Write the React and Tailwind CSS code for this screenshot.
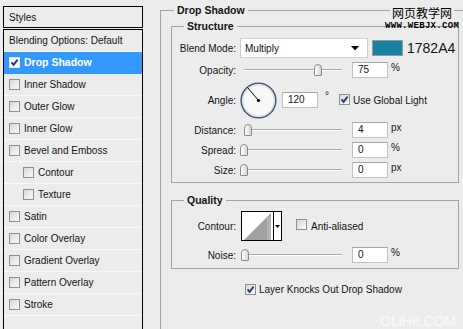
import React from "react";

function Check({ checked = false, selected = false }) {
  return (
    <span
      className={`inline-flex w-[11px] h-[11px] shrink-0 border ${
        selected
          ? "border-[#dfe9f7] bg-white"
          : "border-[#8f9090] bg-linear-to-br from-[#d9d9d6] to-[#fafaf8]"
      }`}
    >
      {checked && (
        <svg viewBox="0 0 9 9" className="w-[9px] h-[9px]">
          <path d="M1.6 4.4 L3.6 6.9 L7.6 1.6" stroke="#2a3b8c" strokeWidth="1.9" fill="none" />
        </svg>
      )}
    </span>
  );
}

function Thumb() {
  return (
    <div className="w-[8px] h-[12px] rounded-t-[4px] rounded-b-[1px] border border-[#8a8a8a] bg-linear-to-r from-white to-[#d6d6d6]" />
  );
}

function Slider({ pos }) {
  return (
    <div className="relative w-[102px] h-[16px] shrink-0">
      <div className="absolute left-[4px] right-0 top-[7px] h-[2px] border-t border-t-[#a9a9a9] border-b border-b-white" />
      <div className="absolute top-[2px]" style={{ left: pos }}>
        <Thumb />
      </div>
    </div>
  );
}

function Input({ value, className = "" }) {
  return (
    <div
      className={`w-[36px] h-[16px] shrink-0 bg-white border border-[#c2c2c2] border-t-[#a5a5a5] pl-[5px] flex items-center leading-none ${className}`}
    >
      {value}
    </div>
  );
}

function Unit({ children }) {
  return <span className="ml-[3px] self-start leading-[12px]">{children}</span>;
}

function Label({ children }) {
  return <span className="w-[64px] shrink-0 text-right mr-[4px]">{children}</span>;
}

function SliderRow({ label, pos, value, unit, className = "" }) {
  return (
    <div className={`flex items-center h-[16px] ${className}`}>
      <Label>{label}</Label>
      <Slider pos={pos} />
      <Input value={value} className="ml-[10px]" />
      <Unit>{unit}</Unit>
    </div>
  );
}

const items = [
  { t: "Blending Options: Default", noCheck: true },
  { t: "Drop Shadow", checked: true, selected: true },
  { t: "Inner Shadow" },
  { t: "Outer Glow" },
  { t: "Inner Glow" },
  { t: "Bevel and Emboss" },
  { t: "Contour", indent: true },
  { t: "Texture", indent: true },
  { t: "Satin" },
  { t: "Color Overlay" },
  { t: "Gradient Overlay" },
  { t: "Pattern Overlay" },
  { t: "Stroke" },
];

export default function App() {
  return (
    <div className="relative w-[463px] h-[329px] overflow-hidden bg-[#ececec] flex text-[10px] text-[#141414] font-['Liberation_Sans',Arial,sans-serif]">
      {/* Left styles list */}
      <div className="ml-[3px] w-[140px] shrink-0 flex flex-col pt-[6px]">
        <div className="h-[22px] border border-black flex items-center pl-[5px]">Styles</div>
        <div className="mt-[1px] flex-1 border border-black border-b-0 flex flex-col">
          {items.map((it) => (
            <div
              key={it.t}
              className={`h-[22px] shrink-0 flex items-center gap-[4px] border-b ${
                it.selected
                  ? "bg-[#3399ff] text-white font-bold text-[10.5px] border-[#3399ff]"
                  : "border-[#f8f8f8]"
              } ${it.indent ? "pl-[19px]" : "pl-[5px]"}`}
            >
              {!it.noCheck && <Check checked={it.checked} selected={it.selected} />}
              <span>{it.t}</span>
            </div>
          ))}
        </div>
      </div>

      {/* Right settings */}
      <div className="flex-1 min-w-0 pl-[17px]">
        <fieldset className="mt-[4px] w-[330px] border border-[#a3a3a3]">
          <legend className="ml-[13px] px-[3px] text-[10.5px] leading-[13px] font-bold">Drop Shadow</legend>
          <div className="pl-[10px] pt-[3px] pb-[60px] flex flex-col">
            {/* Structure */}
            <fieldset className="w-[288px] border border-[#a3a3a3]">
              <legend className="ml-[12px] px-[3px] text-[10.5px] leading-[13px] font-bold">Structure</legend>
              <div className="flex flex-col pt-[5px] pb-[4px]">
                <div className="flex items-center h-[20px]">
                  <Label>Blend Mode:</Label>
                  <div className="w-[128px] h-[20px] shrink-0 bg-white border border-[#cfcfcf] flex items-center justify-between pl-[4px] pr-[8px]">
                    <span>Multiply</span>
                    <svg width="8" height="5" viewBox="0 0 8 5">
                      <path d="M0 0 H8 L4 4.5 Z" fill="#000" />
                    </svg>
                  </div>
                  <div className="ml-[4px] w-[31px] h-[16px] shrink-0 bg-[#1782A4] border border-[#9a9a9a]" />
                  <span className="ml-[4px] text-[14px] leading-none">1782A4</span>
                </div>

                <SliderRow label="Opacity:" pos={74} value="75" unit="%" className="mt-[4px]" />

                <div className="flex items-center h-[36px] mt-[4px]">
                  <Label>Angle:</Label>
                  <svg width="37" height="37" viewBox="0 0 37 37" className="shrink-0">
                    <circle cx="18.5" cy="18.5" r="17.3" fill="#f7f7f8" stroke="#4b5a7c" strokeWidth="1.6" />
                    <circle cx="18.5" cy="18.5" r="15.8" fill="none" stroke="#d5d9e2" strokeWidth="1" />
                    <line x1="18.5" y1="18.5" x2="7.5" y2="5.5" stroke="#000" strokeWidth="1" />
                    <circle cx="18.5" cy="18.5" r="1.6" fill="#000" />
                  </svg>
                  <Input value="120" className="ml-[5px]" />
                  <span className="ml-[7px] self-start mt-[9px] leading-[10px]">°</span>
                  <span className="ml-[10px]">
                    <Check checked />
                  </span>
                  <span className="ml-[3px]">Use Global Light</span>
                </div>

                <SliderRow label="Distance:" pos={4} value="4" unit="px" className="mt-[4px]" />
                <SliderRow label="Spread:" pos={0} value="0" unit="%" className="mt-[4px]" />
                <SliderRow label="Size:" pos={0} value="0" unit="px" className="mt-[4px]" />
              </div>
            </fieldset>

            {/* Quality */}
            <fieldset className="mt-[11px] w-[288px] border border-[#a3a3a3]">
              <legend className="ml-[12px] px-[3px] text-[10.5px] leading-[13px] font-bold">Quality</legend>
              <div className="flex flex-col pt-[4px] pb-[5px]">
                <div className="flex items-center h-[30px]">
                  <Label>Contour:</Label>
                  <div className="ml-[1px] w-[41px] h-[30px] shrink-0 border border-black bg-white flex">
                    <svg width="31" height="28" viewBox="0 0 31 28" className="shrink-0">
                      <polygon points="2,28 29,1 29,28" fill="#a2a2a2" />
                      <rect x="25" y="5" width="4" height="23" fill="#b3b3b3" />
                    </svg>
                    <div className="flex-1 border-l border-black flex items-center justify-center">
                      <svg width="5" height="3" viewBox="0 0 5 3">
                        <path d="M0 0 H5 L2.5 3 Z" fill="#000" />
                      </svg>
                    </div>
                  </div>
                  <span className="ml-[14px]">
                    <Check />
                  </span>
                  <span className="ml-[4px]">Anti-aliased</span>
                </div>
                <SliderRow label="Noise:" pos={1} value="0" unit="%" className="mt-[6px]" />
              </div>
            </fieldset>

            <div className="mt-[13px] h-[14px] flex items-center ml-[74px]">
              <Check checked />
              <span className="ml-[3px]">Layer Knocks Out Drop Shadow</span>
            </div>
          </div>
        </fieldset>
      </div>

      {/* Watermarks */}
      <div className="absolute left-[385px] top-[5px] flex flex-col items-center">
        <span className="px-[2px] bg-[#ececec] text-[12px] leading-[16px] text-black font-['Noto_Sans_CJK_SC',sans-serif]">
          网页教学网
        </span>
        <span className="mt-[1px] text-[9px] leading-[9px] font-bold tracking-[0.3px] text-black font-['Liberation_Mono',monospace]">
          WWW.WEBJX.COM
        </span>
      </div>
      <div className="absolute left-[380px] top-[313px] text-[14px] leading-[16px] text-white/70">OLiHe.COM</div>
    </div>
  );
}
